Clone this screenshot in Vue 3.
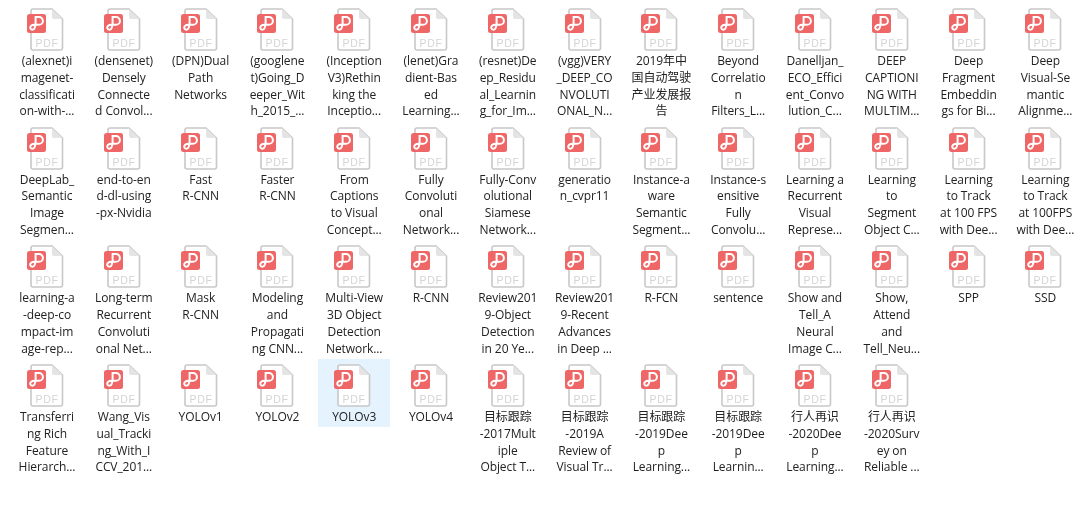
<template>
  <div class="folder">
    <template v-for="(file, i) in files" :key="i">
      <div class="tile" :class="{ selected: file[0] === 'YOLOv3' }">
        <svg class="icon" width="40" height="43" viewBox="0 0 40 43">
          <path d="M4 3 a2 2 0 0 1 2-2 H25 L35.5 11 V40 a2 2 0 0 1 -2 2 H6 a2 2 0 0 1 -2-2 Z" fill="#fff" stroke="#c8c8c8" stroke-width="1.6" />
          <path d="M25 1 V9 a2 2 0 0 0 2 2 H35.5 Z" fill="#e4e4e4" />
          <rect x="0" y="6" width="19" height="19" rx="2.5" fill="#ef6666" />
          <path d="M8.6 16 V9 H12 a3.9 3.9 0 0 1 0 7.8 H7.5 C4.2 16.8 2.8 18.6 3.3 20.2 C3.9 22.2 6.8 22.2 7.7 19.8 L8.6 16.8" fill="none" stroke="#fff" stroke-width="2" />
          <text x="20" y="38.5" text-anchor="middle" class="pdf">PDF</text>
        </svg>
        <div class="name">
          <div v-for="(line, j) in file" :key="j" class="line">{{ line }}</div>
        </div>
      </div>
    </template>
  </div>
</template>

<script setup>
const files = [
  ['(alexnet)i', 'magenet-', 'classificati', 'on-with-...'],
  ['(densenet)', 'Densely', 'Connecte', 'd Convol...'],
  ['(DPN)Dual', 'Path', 'Networks'],
  ['(googlene', 't)Going_D', 'eeper_Wit', 'h_2015_...'],
  ['(Inception', 'V3)Rethin', 'king the', 'Inceptio...'],
  ['(lenet)Gra', 'dient-Bas', 'ed', 'Learning...'],
  ['(resnet)De', 'ep_Residu', 'al_Learnin', 'g_for_Im...'],
  ['(vgg)VERY', '_DEEP_CO', 'NVOLUTI', 'ONAL_N...'],
  ['2019年中', '国自动驾驶', '产业发展报', '告'],
  ['Beyond', 'Correlatio', 'n', 'Filters_L...'],
  ['Danelljan_', 'ECO_Effici', 'ent_Convo', 'lution_C...'],
  ['DEEP', 'CAPTIONI', 'NG WITH', 'MULTIM...'],
  ['Deep', 'Fragment', 'Embeddin', 'gs for Bi...'],
  ['Deep', 'Visual-Se', 'mantic', 'Alignme...'],

  ['DeepLab_', 'Semantic', 'Image', 'Segmen...'],
  ['end-to-en', 'd-dl-using', '-px-Nvidia'],
  ['Fast', 'R-CNN'],
  ['Faster', 'R-CNN'],
  ['From', 'Captions', 'to Visual', 'Concept...'],
  ['Fully', 'Convoluti', 'onal', 'Network...'],
  ['Fully-Conv', 'olutional', 'Siamese', 'Network...'],
  ['generatio', 'n_cvpr11'],
  ['Instance-a', 'ware', 'Semantic', 'Segment...'],
  ['Instance-s', 'ensitive', 'Fully', 'Convolu...'],
  ['Learning a', 'Recurrent', 'Visual', 'Represe...'],
  ['Learning', 'to', 'Segment', 'Object C...'],
  ['Learning', 'to Track', 'at 100 FPS', 'with Dee...'],
  ['Learning', 'to Track', 'at 100FPS', 'with Dee...'],

  ['learning-a', '-deep-co', 'mpact-im', 'age-rep...'],
  ['Long-term', 'Recurrent', 'Convoluti', 'onal Net...'],
  ['Mask', 'R-CNN'],
  ['Modeling', 'and', 'Propagati', 'ng CNN...'],
  ['Multi-View', '3D Object', 'Detection', 'Network...'],
  ['R-CNN'],
  ['Review201', '9-Object', 'Detection', 'in 20 Ye...'],
  ['Review201', '9-Recent', 'Advances', 'in Deep ...'],
  ['R-FCN'],
  ['sentence'],
  ['Show and', 'Tell_A', 'Neural', 'Image C...'],
  ['Show,', 'Attend', 'and', 'Tell_Neu...'],
  ['SPP'],
  ['SSD'],

  ['Transferri', 'ng Rich', 'Feature', 'Hierarch...'],
  ['Wang_Vis', 'ual_Tracki', 'ng_With_I', 'CCV_201...'],
  ['YOLOv1'],
  ['YOLOv2'],
  ['YOLOv3'],
  ['YOLOv4'],
  ['目标跟踪', '-2017Mult', 'iple', 'Object T...'],
  ['目标跟踪', '-2019A', 'Review of', 'Visual Tr...'],
  ['目标跟踪', '-2019Dee', 'p', 'Learning...'],
  ['目标跟踪', '-2019Dee', 'p', 'Learnin...'],
  ['行人再识', '-2020Dee', 'p', 'Learning...'],
  ['行人再识', '-2020Surv', 'ey on', 'Reliable ...']
]
</script>

<style>
html,
body {
  background: #fff;
  overflow: hidden;
}
</style>

<style scoped>
.folder {
  width: 1080px;
  height: 513px;
  box-sizing: border-box;
  padding: 3px 0 0 11px;
  display: grid;
  grid-template-columns: repeat(14, 72px);
  grid-auto-rows: 118.67px;
  column-gap: 4.8px;
  font-family: "Open Sans", "Noto Sans CJK SC", sans-serif;
  font-size: 12px;
  letter-spacing: -0.08px;
  color: #222;
  filter: blur(0.3px);
}

.tile {
  align-self: start;
  display: flex;
  flex-direction: column;
  align-items: center;
  padding: 5px 0 1px;
}

.tile.selected {
  background: #e5f3ff;
}

.icon {
  display: block;
  flex-shrink: 0;
}

.pdf {
  font-family: "Liberation Sans", sans-serif;
  font-size: 10.5px;
  letter-spacing: 0.6px;
  fill: #d4d4d4;
}

.name {
  margin-top: 2px;
  text-align: center;
  line-height: 16.8px;
}

.line {
  white-space: nowrap;
}
</style>
